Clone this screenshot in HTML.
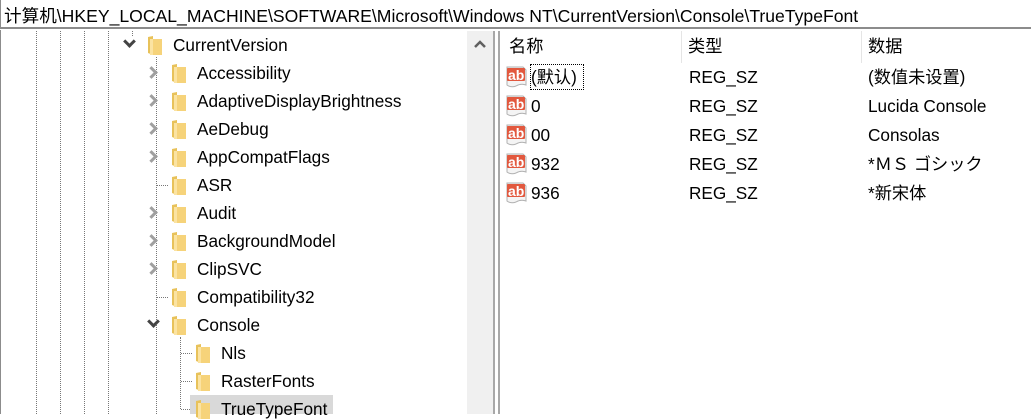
<!DOCTYPE html>
<html><head><meta charset="utf-8"><style>
*{margin:0;padding:0;box-sizing:border-box}
body{width:1031px;height:414px;overflow:hidden;background:#fff;font-family:"Liberation Sans","Noto Sans CJK SC",sans-serif;font-size:17.2px;color:#000;position:relative}
.a{position:absolute;white-space:nowrap}
.addr{left:0;top:0;width:1031px;height:29px;border-bottom:2px solid #8c8c8c;border-left:1px solid #8c8c8c}
.addr span{position:absolute;left:3px;top:3px;font-size:17.6px}
.vd{position:absolute;width:0;border-left:1px dotted #777}
.hd{position:absolute;height:0;border-top:1px dotted #777}
.f{position:absolute;width:14px;height:19px}
.t{position:absolute;line-height:20px}
.chev{position:absolute;width:9px;height:9px;border-right:3px solid;border-bottom:3px solid}
.sel{position:absolute;left:190px;top:395px;width:143px;height:19px;background:#d9d9d9}
.ic{position:absolute;width:21px;height:22px}
.hdr{position:absolute;top:36px;line-height:20px}
</style></head><body>
<div class="a addr"><span>计算机\HKEY_LOCAL_MACHINE\SOFTWARE\Microsoft\Windows NT\CurrentVersion\Console\TrueTypeFont</span></div>
<div class="a" style="left:0;top:30px;width:1px;height:384px;background:#8c8c8c"></div>
<div class="vd" style="left:36px;top:31px;height:383px"></div>
<div class="vd" style="left:60px;top:31px;height:383px"></div>
<div class="vd" style="left:84px;top:31px;height:383px"></div>
<div class="vd" style="left:108px;top:31px;height:383px"></div>
<div class="vd" style="left:132px;top:31px;height:5px"></div>
<div class="vd" style="left:156px;top:57px;height:357px"></div>
<div class="vd" style="left:180px;top:337px;height:72px"></div>
<div class="hd" style="left:157px;top:185px;width:11px"></div>
<div class="hd" style="left:157px;top:297px;width:11px"></div>
<div class="hd" style="left:181px;top:353px;width:11px"></div>
<div class="hd" style="left:181px;top:381px;width:11px"></div>
<div class="hd" style="left:181px;top:409px;width:11px"></div>
<div class="sel"></div>
<div class="chev" style="left:125px;top:37px;transform:rotate(45deg);border-color:#444"></div>
<div class="chev" style="left:147px;top:68px;transform:rotate(-45deg);border-color:#a0a0a0"></div>
<div class="chev" style="left:147px;top:96px;transform:rotate(-45deg);border-color:#a0a0a0"></div>
<div class="chev" style="left:147px;top:124px;transform:rotate(-45deg);border-color:#a0a0a0"></div>
<div class="chev" style="left:147px;top:152px;transform:rotate(-45deg);border-color:#a0a0a0"></div>
<div class="chev" style="left:147px;top:208px;transform:rotate(-45deg);border-color:#a0a0a0"></div>
<div class="chev" style="left:147px;top:236px;transform:rotate(-45deg);border-color:#a0a0a0"></div>
<div class="chev" style="left:147px;top:264px;transform:rotate(-45deg);border-color:#a0a0a0"></div>
<div class="chev" style="left:149px;top:317px;transform:rotate(45deg);border-color:#444"></div>
<svg width="0" height="0" style="position:absolute"><defs><g id="fo"><path d="M0 1 L5 0 L5 19 L0 17 Z" fill="#e8c25a"/><rect x="2" y="3" width="12" height="16" fill="#f6d37a"/><rect x="2" y="3" width="3" height="16" fill="#fbe3a2"/></g></defs></svg>
<svg class="f" style="left:148px;top:36px"><use href="#fo"/></svg>
<div class="t" style="left:173px;top:35px">CurrentVersion</div>
<svg class="f" style="left:172px;top:64px"><use href="#fo"/></svg><div class="t" style="left:197px;top:63px">Accessibility</div>
<svg class="f" style="left:172px;top:92px"><use href="#fo"/></svg><div class="t" style="left:197px;top:91px">AdaptiveDisplayBrightness</div>
<svg class="f" style="left:172px;top:120px"><use href="#fo"/></svg><div class="t" style="left:197px;top:119px">AeDebug</div>
<svg class="f" style="left:172px;top:148px"><use href="#fo"/></svg><div class="t" style="left:197px;top:147px">AppCompatFlags</div>
<svg class="f" style="left:172px;top:176px"><use href="#fo"/></svg><div class="t" style="left:197px;top:175px">ASR</div>
<svg class="f" style="left:172px;top:204px"><use href="#fo"/></svg><div class="t" style="left:197px;top:203px">Audit</div>
<svg class="f" style="left:172px;top:232px"><use href="#fo"/></svg><div class="t" style="left:197px;top:231px">BackgroundModel</div>
<svg class="f" style="left:172px;top:260px"><use href="#fo"/></svg><div class="t" style="left:197px;top:259px">ClipSVC</div>
<svg class="f" style="left:172px;top:288px"><use href="#fo"/></svg><div class="t" style="left:197px;top:287px">Compatibility32</div>
<svg class="f" style="left:172px;top:316px"><use href="#fo"/></svg><div class="t" style="left:197px;top:315px">Console</div>
<svg class="f" style="left:196px;top:344px"><use href="#fo"/></svg><div class="t" style="left:221px;top:343px">Nls</div>
<svg class="f" style="left:196px;top:372px"><use href="#fo"/></svg><div class="t" style="left:221px;top:371px">RasterFonts</div>
<svg class="f" style="left:196px;top:400px"><use href="#fo"/></svg><div class="t" style="left:221px;top:399px">TrueTypeFont</div>
<div class="a" style="left:467px;top:31px;width:26px;height:383px;background:#f0f0f0"></div>
<svg class="a" style="left:474px;top:40px" width="12" height="8"><path d="M1 7 L6 2 L11 7" stroke="#606060" stroke-width="2.5" fill="none"/></svg>
<div class="a" style="left:493px;top:31px;width:2px;height:383px;background:#a8a8a8"></div>
<div class="a" style="left:498px;top:31px;width:2px;height:383px;background:#a8a8a8"></div>
<div class="a" style="left:681px;top:31px;width:1px;height:32px;background:#e5e5e5"></div>
<div class="a" style="left:861px;top:31px;width:1px;height:32px;background:#e5e5e5"></div>
<div class="hdr a" style="left:509px">名称</div>
<div class="hdr a" style="left:688px">类型</div>
<div class="hdr a" style="left:868px">数据</div>
<svg width="0" height="0" style="position:absolute"><defs><g id="ab"><path d="M1 1 H17 L20 4 V19 Q15 17 10 20 Q5 22 1 19 Z" fill="#f4f4f4" stroke="#b0b0b0"/><rect x="1" y="2" width="18" height="13" rx="1" fill="#e2583e"/><text x="2" y="14" font-family="Liberation Sans" font-weight="bold" font-size="14" fill="#fff">ab</text></g></defs></svg>
<svg class="ic" style="left:506px;top:66px"><use href="#ab"/></svg>
<svg class="ic" style="left:506px;top:95px"><use href="#ab"/></svg>
<svg class="ic" style="left:506px;top:124px"><use href="#ab"/></svg>
<svg class="ic" style="left:506px;top:153px"><use href="#ab"/></svg>
<svg class="ic" style="left:506px;top:182px"><use href="#ab"/></svg>
<div class="a" style="left:530px;top:64px;width:54px;height:26px;border:1px dotted #000"></div>
<div class="t" style="left:531px;top:67px">(默认)</div>
<div class="t" style="left:531px;top:96px">0</div>
<div class="t" style="left:531px;top:125px">00</div>
<div class="t" style="left:531px;top:154px">932</div>
<div class="t" style="left:531px;top:183px">936</div>
<div class="t" style="left:689px;top:67px">REG_SZ</div>
<div class="t" style="left:689px;top:96px">REG_SZ</div>
<div class="t" style="left:689px;top:125px">REG_SZ</div>
<div class="t" style="left:689px;top:154px">REG_SZ</div>
<div class="t" style="left:689px;top:183px">REG_SZ</div>
<div class="t" style="left:868px;top:67px">(数值未设置)</div>
<div class="t" style="left:868px;top:96px">Lucida Console</div>
<div class="t" style="left:868px;top:125px">Consolas</div>
<div class="t" style="left:868px;top:154px">*ＭＳ ゴシック</div>
<div class="t" style="left:868px;top:183px">*新宋体</div>
</body></html>
